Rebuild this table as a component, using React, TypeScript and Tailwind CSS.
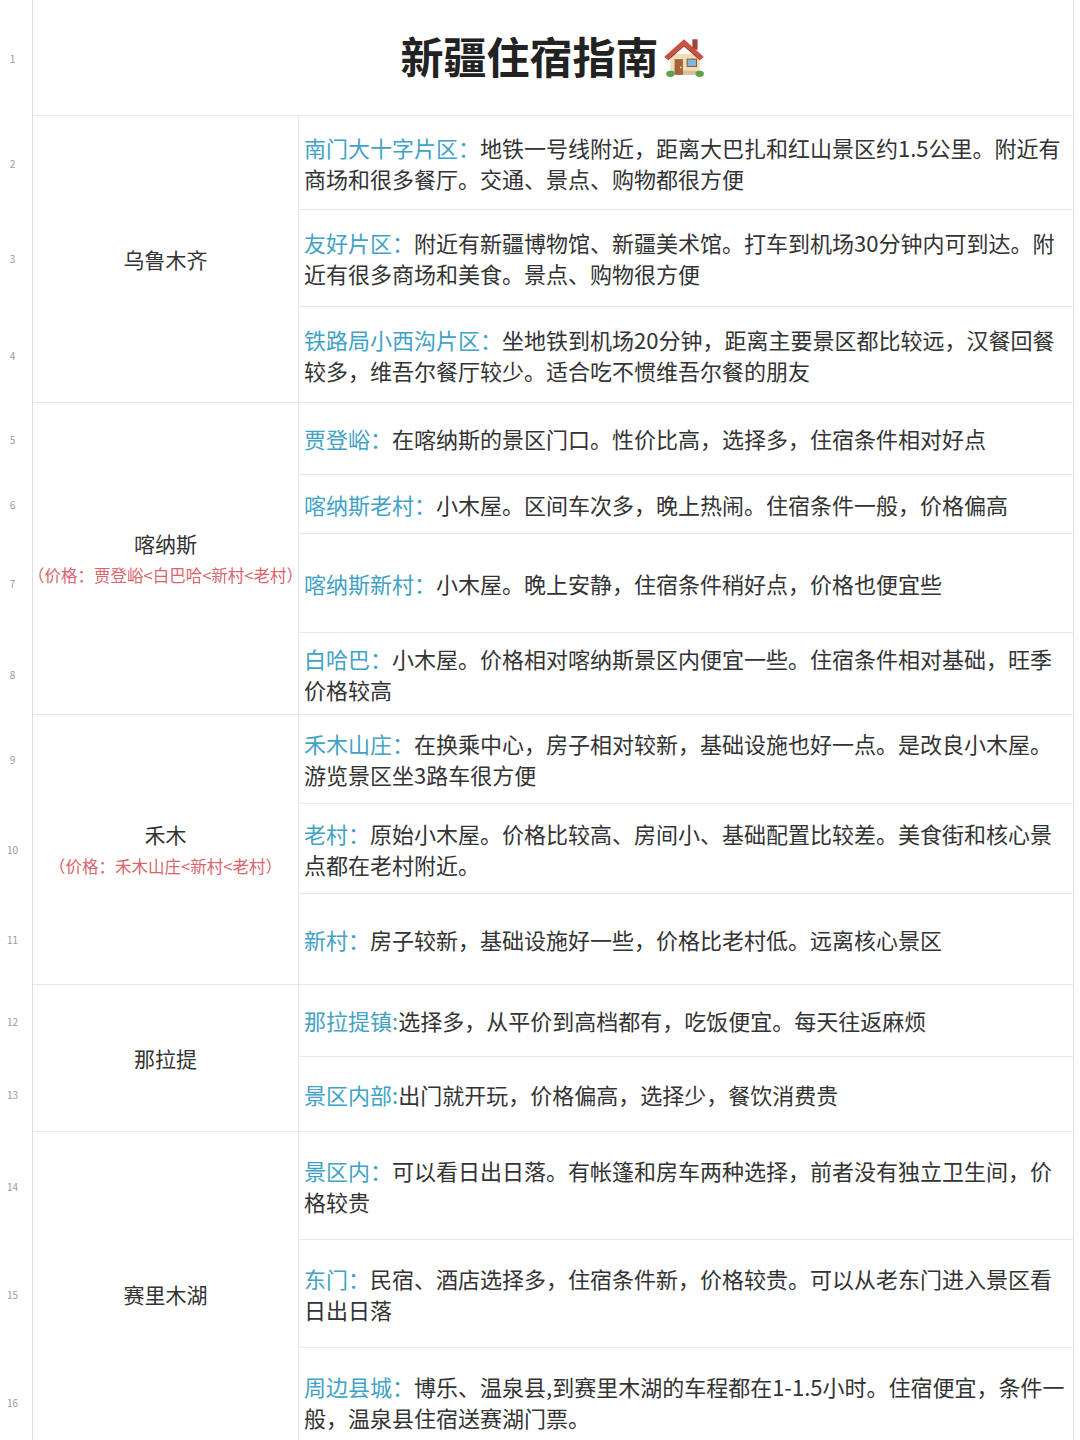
import type { ReactNode } from "react";

type Item = { label: string; lines: string[] };
type Group = { name: string; note?: string; items: Item[] };

const heights = [94, 97, 96, 72, 59, 99, 82, 89, 90, 91, 72, 75, 108, 108, 108];

const groups: Group[] = [
  {
    name: "乌鲁木齐",
    items: [
      { label: "南门大十字片区：", lines: ["地铁一号线附近，距离大巴扎和红山景区约1.5公里。附近有", "商场和很多餐厅。交通、景点、购物都很方便"] },
      { label: "友好片区：", lines: ["附近有新疆博物馆、新疆美术馆。打车到机场30分钟内可到达。附", "近有很多商场和美食。景点、购物很方便"] },
      { label: "铁路局小西沟片区：", lines: ["坐地铁到机场20分钟，距离主要景区都比较远，汉餐回餐", "较多，维吾尔餐厅较少。适合吃不惯维吾尔餐的朋友"] },
    ],
  },
  {
    name: "喀纳斯",
    note: "（价格：贾登峪<白巴哈<新村<老村）",
    items: [
      { label: "贾登峪：", lines: ["在喀纳斯的景区门口。性价比高，选择多，住宿条件相对好点"] },
      { label: "喀纳斯老村：", lines: ["小木屋。区间车次多，晚上热闹。住宿条件一般，价格偏高"] },
      { label: "喀纳斯新村：", lines: ["小木屋。晚上安静，住宿条件稍好点，价格也便宜些"] },
      { label: "白哈巴：", lines: ["小木屋。价格相对喀纳斯景区内便宜一些。住宿条件相对基础，旺季", "价格较高"] },
    ],
  },
  {
    name: "禾木",
    note: "（价格：禾木山庄<新村<老村）",
    items: [
      { label: "禾木山庄：", lines: ["在换乘中心，房子相对较新，基础设施也好一点。是改良小木屋。", "游览景区坐3路车很方便"] },
      { label: "老村：", lines: ["原始小木屋。价格比较高、房间小、基础配置比较差。美食街和核心景", "点都在老村附近。"] },
      { label: "新村：", lines: ["房子较新，基础设施好一些，价格比老村低。远离核心景区"] },
    ],
  },
  {
    name: "那拉提",
    items: [
      { label: "那拉提镇:", lines: ["选择多，从平价到高档都有，吃饭便宜。每天往返麻烦"] },
      { label: "景区内部:", lines: ["出门就开玩，价格偏高，选择少，餐饮消费贵"] },
    ],
  },
  {
    name: "赛里木湖",
    items: [
      { label: "景区内：", lines: ["可以看日出日落。有帐篷和房车两种选择，前者没有独立卫生间，价", "格较贵"] },
      { label: "东门：", lines: ["民宿、酒店选择多，住宿条件新，价格较贵。可以从老东门进入景区看", "日出日落"] },
      { label: "周边县城：", lines: ["博乐、温泉县,到赛里木湖的车程都在1-1.5小时。住宿便宜，条件一", "般，温泉县住宿送赛湖门票。"] },
    ],
  },
];

function HouseIcon() {
  return (
    <svg width="46" height="46" viewBox="0 0 44 44" className="ml-[2px]">
      <rect x="30" y="6" width="5" height="10" fill="#a0443a" />
      <rect x="9" y="20" width="28" height="20" fill="#f1dcb8" />
      <rect x="9" y="36" width="28" height="4" fill="#d9bf95" />
      <path d="M3 23 L22 6 L41 23 L38 25 L22 11 L6 25 Z" fill="#c94f3f" />
      <path d="M22 11 L38 25 L37 26 L22 13 L7 26 L6 25 Z" fill="#9e3a2f" />
      <rect x="13" y="25" width="8" height="15" fill="#a5633a" />
      <circle cx="19" cy="33" r="0.9" fill="#f4d27a" />
      <rect x="25" y="25" width="9" height="7" fill="#7fb8dc" stroke="#8a5a3a" strokeWidth="1" />
      <ellipse cx="9" cy="39" rx="4" ry="3" fill="#5aa346" />
      <ellipse cx="37" cy="39" rx="4" ry="3" fill="#5aa346" />
    </svg>
  );
}

function Cell({ className, children }: { className?: string; children?: ReactNode }) {
  return <div className={className}>{children}</div>;
}

export default function App() {
  let row = 2;
  const cells: ReactNode[] = [];

  groups.forEach((group, gi) => {
    group.items.forEach((item, ii) => {
      const r = row;
      cells.push(
        <Cell key={`n${r}`} className="col-start-1 flex items-center justify-center border-r border-[#dedede] pr-[7px] text-[10px] text-[#9a9a9a]">
          {r}
        </Cell>
      );
      if (ii === 0) {
        cells.push(
          <Cell
            key={`g${gi}`}
            className={
              "col-start-2 flex flex-col items-center justify-center border-b border-r border-[#e8e8e8] " +
              (group.items.length === 3 ? "row-span-3" : group.items.length === 4 ? "row-span-4" : "row-span-2")
            }
          >
            <div className="text-[21px] leading-[32px] text-[#333]">{group.name}</div>
            {group.note ? <div className="whitespace-nowrap text-[16.5px] leading-[32px] text-[#d9646c]">{group.note}</div> : null}
          </Cell>
        );
      }
      cells.push(
        <Cell key={`t${r}`} className="col-start-3 flex flex-col justify-center border-b border-[#e8e8e8] pl-[5px] text-[22px] leading-[31px] text-[#333]">
          {item.lines.map((line, li) => (
            <div key={li} className="whitespace-nowrap">
              {li === 0 ? <span className="text-[#3fa2c6]">{item.label}</span> : null}
              {line}
            </div>
          ))}
        </Cell>
      );
      row += 1;
    });
  });

  return (
    <main className="min-h-screen overflow-hidden bg-white font-['Noto_Sans_CJK_SC','Noto_Sans',sans-serif]">
      <div
        className="grid w-[1074px] grid-cols-[33px_266px_775px] border-r border-[#e0e0e0]"
        style={{ gridTemplateRows: `116px ${heights.map((h) => `${h}px`).join(" ")}` }}
      >
        <Cell className="col-start-1 flex items-center justify-center border-r border-[#dedede] pr-[7px] text-[10px] text-[#9a9a9a]">1</Cell>
        <Cell className="col-span-2 col-start-2 flex items-center justify-center border-b border-[#e8e8e8] pb-[4px]">
          <h1 className="text-[43px] font-bold leading-none tracking-[0px] text-[#222]">新疆住宿指南</h1>
          <HouseIcon />
        </Cell>
        {cells}
      </div>
    </main>
  );
}
